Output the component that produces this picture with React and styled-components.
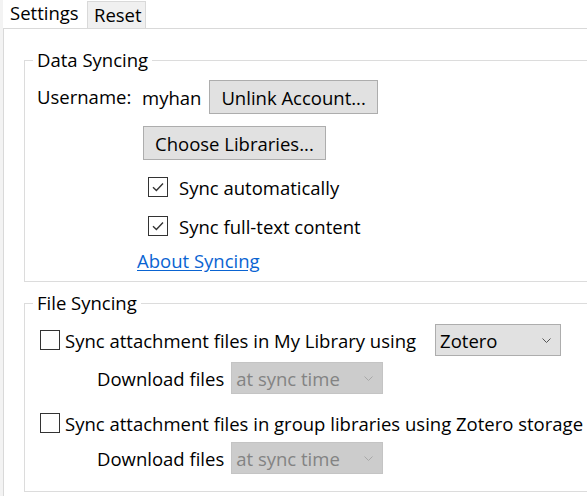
import React from "react";
import styled, { createGlobalStyle } from "styled-components";

const GlobalStyle = createGlobalStyle`
  html, body {
    margin: 0;
    padding: 0;
    background: #fff;
    overflow: hidden;
  }
  body {
    font-family: "Open Sans", "Noto Sans", sans-serif;
    font-size: 18.5px;
    color: #000;
  }
`;

const Window = styled.div`
  width: 640px;
  height: 496px;
  border-left: 3px solid #f3f3f3;
  display: flex;
  flex-direction: column;
`;

const TabBar = styled.div`
  display: flex;
  align-items: flex-end;
  height: 28px;
`;

const Tab = styled.div`
  box-sizing: border-box;
  height: ${(props) => (props.active ? "28px" : "27px")};
  line-height: 26px;
  padding: 0 ${(props) => (props.active ? "7px" : "6px")};
  background: ${(props) => (props.active ? "#fff" : "#f0f0f0")};
  border: ${(props) => (props.active ? "none" : "1px solid #d9d9d9")};
  border-bottom: none;
  width: ${(props) => props.width}px;
`;

const Panel = styled.div`
  flex: 1;
  border-top: 1px solid #d9d9d9;
  border-left: 1px solid #d9d9d9;
  padding: 19px 0 0 20px;
  display: flex;
  flex-direction: column;
  gap: 9px;
`;

const Group = styled.fieldset`
  margin: 0;
  padding: 0 0 ${(props) => props.bottom}px 8px;
  border: 1px solid #dcdcdc;
  min-width: 0;
`;

const Legend = styled.legend`
  padding: 0 4px;
  line-height: 24px;
`;

const AccountGrid = styled.div`
  display: grid;
  grid-template-columns: 109px auto;
  align-items: start;
  padding-top: 8px;
`;

const Label = styled.span`
  padding-left: 4px;
  line-height: 34px;
`;

const Column = styled.div`
  display: flex;
  flex-direction: column;
  align-items: flex-start;
`;

const UserRow = styled.div`
  display: flex;
  align-items: center;
  gap: 8px;
`;

const Button = styled.button`
  font: inherit;
  color: #000;
  background: #e1e1e1;
  border: 1px solid #adadad;
  border-radius: 0;
  height: 34px;
  padding: 0 11px;
  margin: ${(props) => props.margin || 0};
`;

const CheckRow = styled.label`
  display: flex;
  align-items: center;
  gap: ${(props) => props.gap}px;
  height: 24px;
  margin: ${(props) => props.margin || 0};
  white-space: nowrap;
`;

const Box = styled.span`
  box-sizing: border-box;
  width: 20px;
  height: 20px;
  border: 1px solid #333;
  background: #fff;
  display: flex;
  align-items: center;
  justify-content: center;
  flex-shrink: 0;
`;

const Link = styled.a`
  color: #0a64d2;
  text-decoration: underline;
  text-underline-offset: 2px;
  margin: 11px 0 0 -5px;
  line-height: 24px;
`;

const FileRows = styled.div`
  display: flex;
  flex-direction: column;
  padding: 8px 0 0 7px;
`;

const OptionRow = styled.div`
  display: flex;
  align-items: center;
  gap: ${(props) => props.gap || 0}px;
  height: ${(props) => props.height}px;
  padding-left: ${(props) => props.indent || 0}px;
  margin-top: ${(props) => props.top || 0}px;
  white-space: nowrap;
`;

const Spacer = styled.span`
  width: ${(props) => props.width}px;
  flex-shrink: 0;
`;

const Select = styled.div`
  box-sizing: border-box;
  display: flex;
  align-items: center;
  justify-content: space-between;
  width: ${(props) => props.width}px;
  height: 32px;
  padding: 0 9px 0 4px;
  background: ${(props) => (props.disabled ? "#cccccc" : "#e1e1e1")};
  border: 1px solid ${(props) => (props.disabled ? "#c4c4c4" : "#adadad")};
  color: ${(props) => (props.disabled ? "#838383" : "#000")};
`;

const Check = () => (
  <svg width="14" height="14" viewBox="0 0 14 14">
    <path d="M2 7.2 L5.4 10.4 L12 3.6" fill="none" stroke="#333" strokeWidth="1.4" />
  </svg>
);

const Chevron = ({ color }) => (
  <svg width="9" height="5" viewBox="0 0 9 5">
    <path d="M0.5 0.5 L4.5 4.5 L8.5 0.5" fill="none" stroke={color} strokeWidth="1" />
  </svg>
);

const Checkbox = ({ checked, gap, margin, children }) => (
  <CheckRow gap={gap} margin={margin}>
    <Box>{checked && <Check />}</Box>
    {children}
  </CheckRow>
);

const Dropdown = ({ value, width, disabled }) => (
  <Select width={width} disabled={disabled}>
    <span>{value}</span>
    <Chevron color={disabled ? "#a8a8a8" : "#555"} />
  </Select>
);

export default function App() {
  return (
    <>
      <GlobalStyle />
      <Window>
        <TabBar>
          <Tab active width={84}>Settings</Tab>
          <Tab width={59}>Reset</Tab>
        </TabBar>
        <Panel>
          <Group bottom={8}>
            <Legend>Data Syncing</Legend>
            <AccountGrid>
              <Label>Username:</Label>
              <Column>
                <UserRow>
                  <span>myhan</span>
                  <Button>Unlink Account...</Button>
                </UserRow>
                <Button margin="12px 0 0 1px">Choose Libraries...</Button>
                <Checkbox checked gap={11} margin="15px 0 0 6px">
                  Sync automatically
                </Checkbox>
                <Checkbox checked gap={11} margin="15px 0 0 6px">
                  Sync full-text content
                </Checkbox>
                <Link>About Syncing</Link>
              </Column>
            </AccountGrid>
          </Group>
          <Group bottom={17}>
            <Legend>File Syncing</Legend>
            <FileRows>
              <OptionRow height={32} gap={5} top={1}>
                <Box />
                <span>Sync attachment files in My Library using</span>
                <Spacer width={9} />
                <Dropdown value="Zotero" width={126} />
              </OptionRow>
              <OptionRow height={32} gap={7} indent={57} top={6}>
                <span>Download files</span>
                <Dropdown value="at sync time" width={152} disabled />
              </OptionRow>
              <OptionRow height={24} gap={5} top={17}>
                <Box />
                <span>Sync attachment files in group libraries using Zotero storage</span>
              </OptionRow>
              <OptionRow height={32} gap={7} indent={57} top={7}>
                <span>Download files</span>
                <Dropdown value="at sync time" width={152} disabled />
              </OptionRow>
            </FileRows>
          </Group>
        </Panel>
      </Window>
    </>
  );
}
